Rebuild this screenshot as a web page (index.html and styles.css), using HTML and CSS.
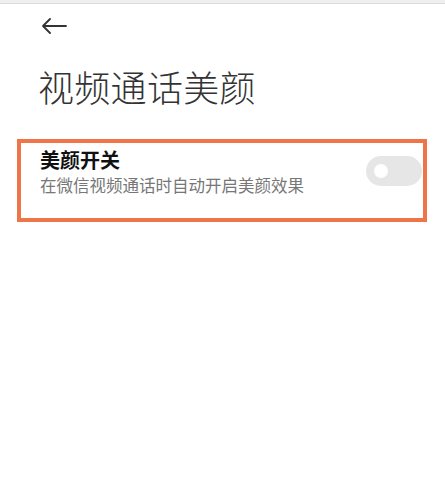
FILE: index.html
```html
<!DOCTYPE html>
<html lang="zh">
<head>
<meta charset="utf-8">
<link rel="stylesheet" href="styles.css">
</head>
<body>
<div class="topbar"></div>
<header class="nav">
  <svg class="back" width="26" height="16" viewBox="0 0 26 16"><path d="M25 8H2M9 1L2 8l7 7" fill="none" stroke="#333" stroke-width="1.8" stroke-linecap="round" stroke-linejoin="round"/></svg>
</header>
<h1 class="title">视频通话美颜</h1>
<section class="card">
  <div class="text">
    <div class="label">美颜开关</div>
    <div class="desc">在微信视频通话时自动开启美颜效果</div>
  </div>
  <div class="toggle"><span class="knob"></span></div>
</section>
</body>
</html>
```

FILE: styles.css
```css
html, body {
  margin: 0;
  padding: 0;
  background: #fff;
  font-family: "Noto Sans CJK SC", "Noto Sans", sans-serif;
}
.topbar {
  height: 3px;
  background: #efefef;
  border-bottom: 1px solid #dcdcdc;
}
.nav {
  height: 42px;
  padding-left: 41px;
  display: flex;
  align-items: center;
  margin-top: 0;
}
.back { display: block; margin-top: 1px; }
.title {
  margin: 18px 0 0 38px;
  font-size: 36px;
  font-weight: 300;
  color: #333;
  line-height: 44px;
  letter-spacing: 0.3px;
}
.card {
  margin: 31px 0 0 17px;
  width: 402px;
  height: 75px;
  border: 4px solid #ef7548;
  display: flex;
  align-items: flex-start;
  justify-content: space-between;
}
.text { padding: 4px 0 0 19px; }
.label {
  font-size: 20px;
  font-weight: 700;
  color: #111;
  line-height: 26px;
}
.desc {
  font-size: 16.5px;
  color: #777;
  line-height: 24px;
}
.toggle {
  margin: 13px 1px 0 0;
  width: 56px;
  height: 30px;
  border-radius: 15px;
  background: #e6e6e6;
  display: flex;
  align-items: center;
  padding-left: 8px;
  box-sizing: border-box;
}
.knob {
  width: 14px;
  height: 14px;
  border-radius: 50%;
  background: #fff;
}
```
